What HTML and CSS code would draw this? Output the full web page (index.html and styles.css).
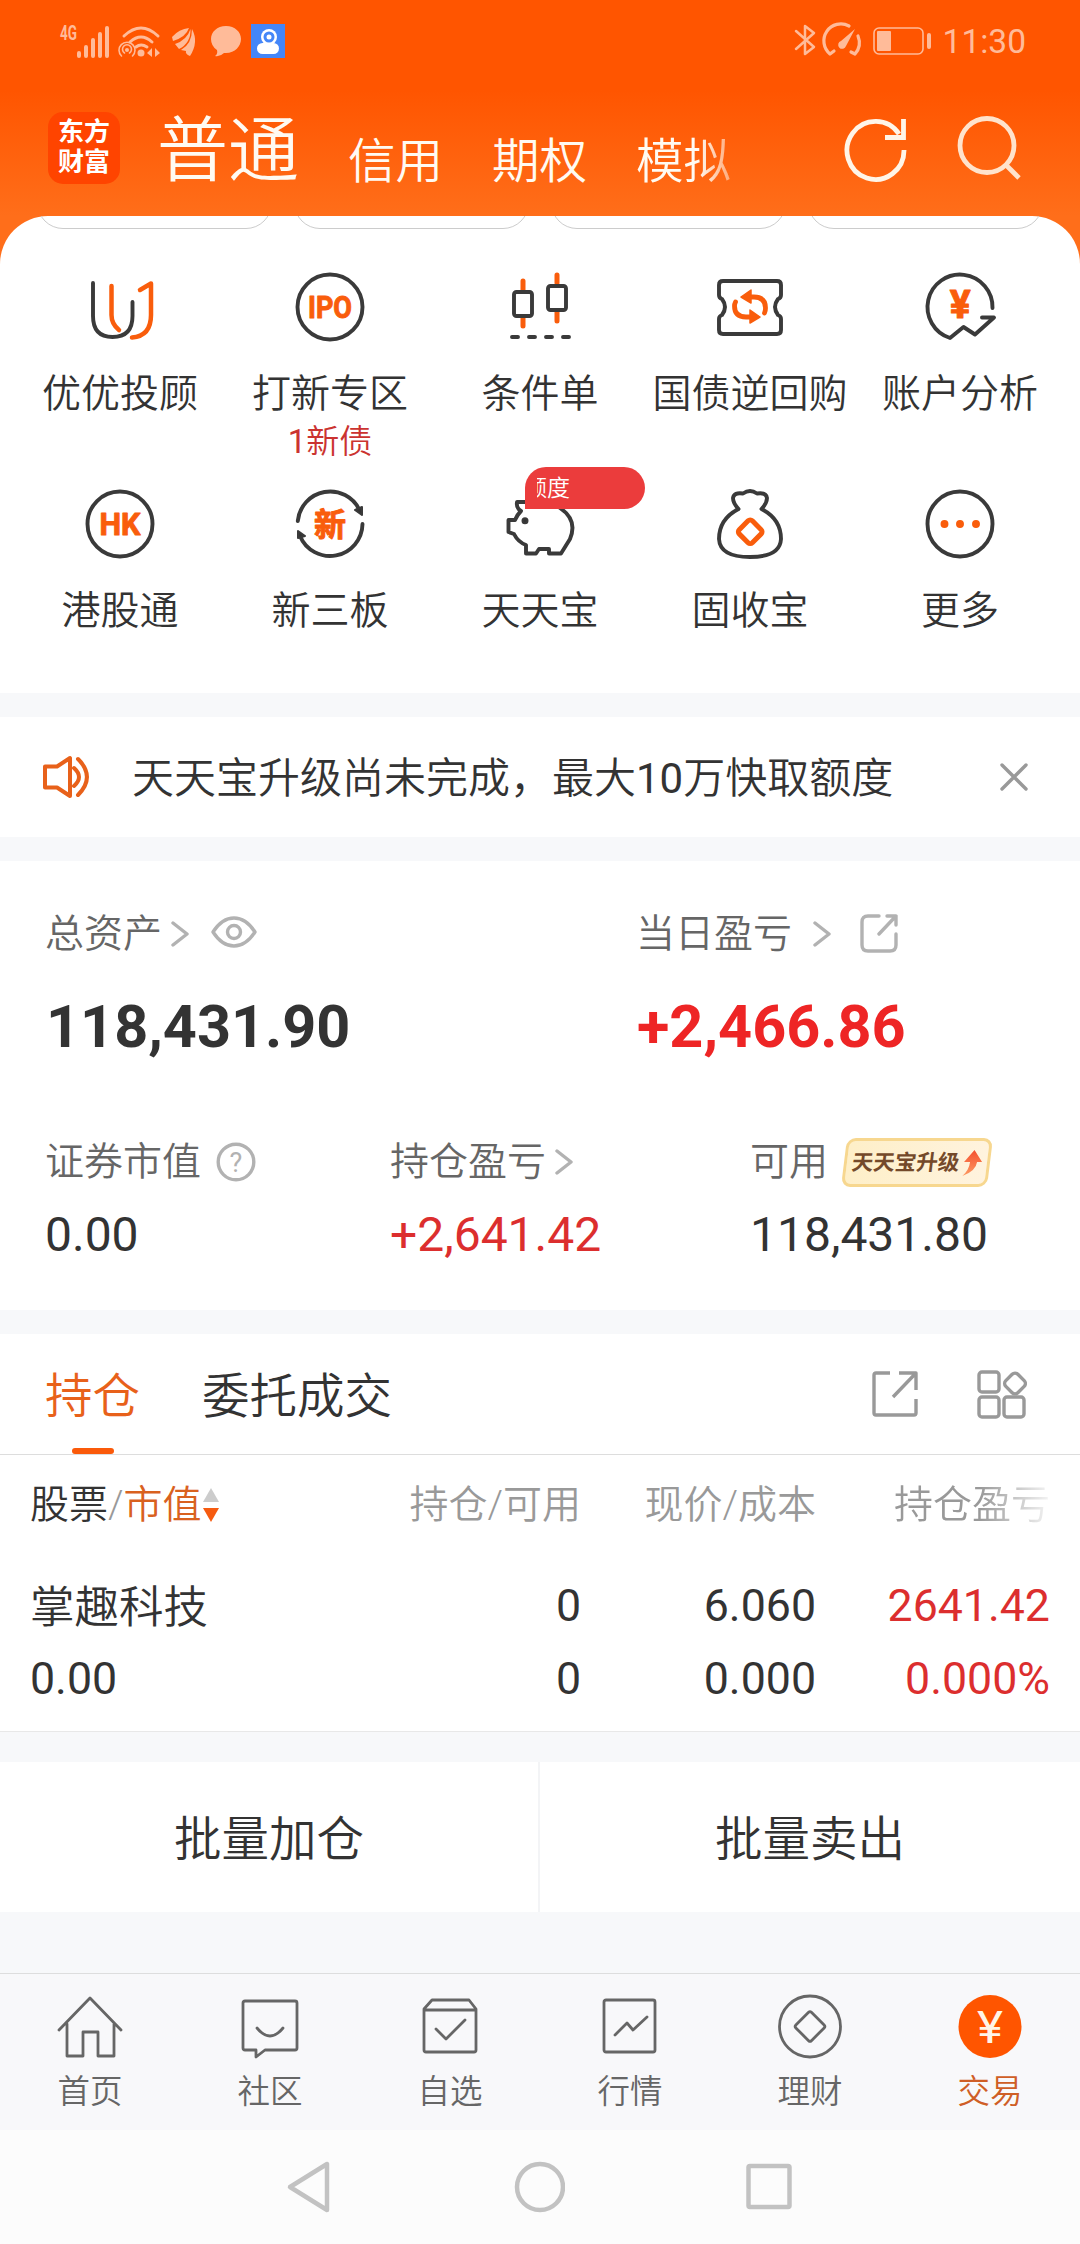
FILE: index.html
```html
<!doctype html>
<html lang="zh-CN">

<head>
    <meta charset="utf-8">
    <title>交易</title>
    <meta name="viewport" content="width=device-width, initial-scale=1">
    <link rel="stylesheet" href="styles.css">
</head>

<body>
    <header class="header">
        <div class="status">
            <div class="status-left">
                <svg class="status-signal" width="54" height="36" viewBox="-4 0 54 36">
                    <text x="0" y="17" textLength="17" lengthAdjust="spacingAndGlyphs">4G</text>
                    <path d="M19 30v3M26 24v9M33 17v16M40 11v22M47 5v28" />
                </svg>
                <svg class="status-wifi" width="44" height="36" viewBox="0 0 44 36">
                    <path d="M6 13Q23-3 40 13M12 19Q23 9 34 19M18 24Q23 20 29 24" stroke-width="3" />
                    <path d="M3.500 33A8 8 0 1 1 14.500 33M6.500 30A4.500 4.500 0 1 1 11.500 30" stroke-width="1.600" />
                    <circle class="fill" cx="9" cy="27" r="2" />
                    <circle class="fill" cx="23" cy="30" r="3.500" />
                    <path class="fill" d="M29 30l5-5v9zM37 25l5 5-5 4z" />
                </svg>
                <svg class="status-leaf" width="26" height="30" viewBox="0 0 26 30">
                    <path d="M1 10Q8 2 18 1Q15 10 2 14zM4 17Q16 13 19.500 2Q20 16 8 22zM10 23Q21 17 21 2Q28 15 19 29Q14 27 15 24z" />
                </svg>
                <svg class="status-chat" width="32" height="32" viewBox="0 0 32 32">
                    <path d="M16 1C25 1 31 7 31 14S25 28 16 28L14 28Q10 32 5 31Q8 29 7 25Q1 21 1 14C1 7 7 1 16 1z" />
                </svg>
                <svg class="status-cam" width="34" height="34" viewBox="0 0 34 34">
                    <rect width="34" height="34" fill="#4486f8" />
                    <circle cx="18" cy="13" r="8" fill="#fff" />
                    <circle cx="18" cy="13" r="5.500" fill="#4486f8" />
                    <circle cx="18" cy="13" r="2.500" fill="#fff" />
                    <rect x="6" y="19" width="22" height="11" rx="5.500" fill="#fff" />
                </svg>
            </div>
            <div class="status-right">
                <svg width="22" height="34" viewBox="0 0 22 34">
                    <path d="M2 8L20 24L11 31V3L20 10L2 26" stroke-width="2.500" />
                </svg>
                <svg width="38" height="34" viewBox="0 0 38 34">
                    <path d="M25 3A17 17 0 0 0 6 31L10 28M34 13Q38 23 31 31L27 29" stroke-width="3.200" />
                    <path class="fill" d="M31 6L22 23A4 4 0 1 1 17 18z" />
                </svg>
                <svg width="60" height="34" viewBox="0 0 60 34">
                    <rect x="2" y="5" width="49" height="26" rx="5" stroke-width="1.600" />
                    <rect class="fill" x="5" y="8" width="14" height="20" rx="1" />
                    <rect class="fill" x="55" y="10" width="4" height="16" rx="2" />
                </svg>
                <span class="status-time">11:30</span>
            </div>
        </div>
        <div class="topnav">
            <div class="logo">东方<br>财富</div>
            <nav class="accounts">
                <span class="account account-active">普通</span>
                <span class="account">信用</span>
                <span class="account">期权</span>
                <span class="account account-fade">模拟</span>
            </nav>
            <svg class="icon-refresh" width="64" height="66" viewBox="0 0 64 66">
                <path d="M60 34A28.500 29 0 1 1 55 18" />
                <path d="M59.500 3V21.500H41" />
            </svg>
            <svg class="icon-search" width="66" height="66" viewBox="0 0 66 66">
                <circle cx="30" cy="29.500" r="27" />
                <path d="M48 48L62 62" />
            </svg>
        </div>
    </header>

    <section class="panel shortcuts">
        <div class="pills"><i></i><i></i><i></i><i></i></div>
        <div class="shortcut-grid">
            <div class="shortcut">
                <svg class="shortcut-icon" viewBox="0 0 72 72">
                    <path d="M9 12V45Q9 66 28.500 66Q48.500 66 48.500 45V31" />
                    <path class="accent" d="M27.500 15V44Q27.500 53 35 59M48 66.500Q67 65 67 44V12.500L56 19" stroke-width="4.500" />
                </svg>
                <span>优优投顾</span>
            </div>
            <div class="shortcut">
                <svg class="shortcut-icon" viewBox="0 0 72 72">
                    <circle cx="36" cy="36" r="32.500" />
                    <text x="14" y="47" textLength="44" lengthAdjust="spacingAndGlyphs">IPO</text>
                </svg>
                <span>打新专区</span>
                <small><i class="num">1</i>新债</small>
            </div>
            <div class="shortcut">
                <svg class="shortcut-icon" viewBox="0 0 72 72">
                    <path class="accent" d="M19 10V19M19 46V55M53 4V12M53 41V50" stroke-width="5" />
                    <rect x="10" y="21" width="18" height="24" rx="2.500" />
                    <rect x="44" y="15" width="18" height="24" rx="2.500" />
                    <path d="M8 66H14M25 66H31M42 66H48M59 66H65" />
                </svg>
                <span>条件单</span>
            </div>
            <div class="shortcut">
                <svg class="shortcut-icon" viewBox="0 0 72 72">
                    <path d="M9 10H63Q67 10 67 14V24Q67 27 64 28Q58 36 64 44Q67 45 67 48V59Q67 63 63 63H9Q5 63 5 59V48Q5 45 8 44Q14 36 8 28Q5 27 5 24V14Q5 10 9 10z" />
                    <path class="accent" d="M36 26H40Q51.500 26 51.500 37Q51.500 40 50.500 42M21.500 31Q20.500 33 20.500 35Q20.500 46 32 46H36" stroke-width="4.800" />
                    <path class="accent-fill" d="M27 26L37 19V32zM46 46L36 39V52z" />
                </svg>
                <span>国债逆回购</span>
            </div>
            <div class="shortcut">
                <svg class="shortcut-icon" viewBox="0 0 72 72">
                    <path d="M68.500 37A32.500 32.500 0 1 0 26 67L39.500 56L51 63.500L70 46.500H58" />
                    <text class="yuan" x="36.300" y="47" text-anchor="middle">¥</text>
                </svg>
                <span>账户分析</span>
            </div>
            <div class="shortcut">
                <svg class="shortcut-icon" viewBox="0 0 72 72">
                    <circle cx="36" cy="36" r="32.500" />
                    <text x="15.500" y="47" textLength="41" lengthAdjust="spacingAndGlyphs">HK</text>
                </svg>
                <span>港股通</span>
            </div>
            <div class="shortcut">
                <svg class="shortcut-icon" viewBox="0 0 72 72">
                    <path d="M3.800 33A32.500 32.500 0 0 1 65.500 22M68.500 36A32.500 32.500 0 0 1 6 48" />
                    <path class="dark-fill" d="M61 22L68 19V27zM4 43L11 48L4 50z" />
                    <text x="20" y="47.500">新</text>
                </svg>
                <span>新三板</span>
            </div>
            <div class="shortcut">
                <svg class="shortcut-icon" viewBox="0 0 72 72">
                    <path d="M24 14H13Q12 20 17 23Q13 27 11 32H4.500V44L10 46Q14 54 22 57V65.500H32L35 61H45V65.500H57L66 51Q74 32 56 20" />
                    <circle class="dark-fill" cx="21" cy="32.700" r="2.500" />
                </svg>
                <span>天天宝</span>
                <b class="ribbon"><em>额度</em></b>
            </div>
            <div class="shortcut">
                <svg class="shortcut-icon" viewBox="0 0 72 72">
                    <path d="M24.500 21Q5 31 5 51Q6 69 36 69Q66 69 67 51Q67 31 47.500 21Q53 15 53 10Q52 4 43 5.500Q36 .5 29 5.500Q20 4 19 10Q19 15 24.500 21" />
                    <rect class="accent" x="27" y="34.500" width="18.500" height="18.500" rx="3" transform="rotate(45 36.200 43.700)" stroke-width="5" />
                </svg>
                <span>固收宝</span>
            </div>
            <div class="shortcut">
                <svg class="shortcut-icon" viewBox="0 0 72 72">
                    <circle cx="36" cy="36" r="32.500" />
                    <g class="accent-fill">
                        <circle cx="20.500" cy="36" r="3.200" />
                        <circle cx="36" cy="36" r="3.200" />
                        <circle cx="52" cy="36" r="3.200" />
                    </g>
                </svg>
                <span>更多</span>
            </div>
        </div>
    </section>

    <section class="panel notice">
        <svg class="icon-speaker" width="50" height="44" viewBox="0 0 50 44">
            <path d="M3 11.500H15L28 3V41L15 32.500H3zM32 13Q42 22 32 31M36 4Q54 22 36 40" />
        </svg>
        <p>天天宝升级尚未完成，最大<i class="num">10</i>万快取额度</p>
        <svg class="icon-close" width="30" height="30" viewBox="0 0 30 30">
            <path d="M3 3L27 27M27 3L3 27" />
        </svg>
    </section>

    <section class="panel assets">
        <div class="assets-main">
            <div>
                <div class="label">总资产
                    <svg class="chevron" width="18" height="26" viewBox="0 0 18 26"><path d="M2 2L16 13L2 24" /></svg>
                    <svg class="icon-eye" width="46" height="34" viewBox="0 0 46 34">
                        <path d="M2 17Q11 3 23 3T44 17Q35 31 23 31T2 17z" />
                        <circle cx="23" cy="17" r="6.500" />
                    </svg>
                </div>
                <div class="total">118,431.90</div>
            </div>
            <div>
                <div class="label">当日盈亏
                    <svg class="chevron chevron-gap" width="18" height="26" viewBox="0 0 18 26"><path d="M2 2L16 13L2 24" /></svg>
                    <svg class="icon-share-sm" width="38" height="40" viewBox="0 0 38 40">
                        <path d="M19 3H8Q2 3 2 9V32Q2 38 8 38H30Q36 38 36 32V21M27 3H36V12M36 3L19 21" />
                    </svg>
                </div>
                <div class="total up">+2,466.86</div>
            </div>
        </div>
        <div class="assets-sub">
            <div>
                <div class="label">证券市值
                    <svg class="icon-help" width="40" height="40" viewBox="0 0 40 40">
                        <circle cx="20" cy="20" r="17.800" />
                        <text x="20" y="29.500" text-anchor="middle">?</text>
                    </svg>
                </div>
                <div class="value">0.00</div>
            </div>
            <div>
                <div class="label">持仓盈亏
                    <svg class="chevron" width="18" height="26" viewBox="0 0 18 26"><path d="M2 2L16 13L2 24" /></svg>
                </div>
                <div class="value up">+2,641.42</div>
            </div>
            <div>
                <div class="label">可用
                    <span class="upgrade">天天宝升级
                        <svg width="19" height="26" viewBox="0 0 19 26">
                            <path d="M10 0L19 12H14Q14 21 1 26Q7 20 7 12H1z" fill="url(#arrow)" />
                            <defs>
                                <linearGradient id="arrow" x1="0" y1="0" x2="0" y2="1">
                                    <stop offset="0" stop-color="#f4502f" />
                                    <stop offset="1" stop-color="#fd9a62" />
                                </linearGradient>
                            </defs>
                        </svg>
                    </span>
                </div>
                <div class="value">118,431.80</div>
            </div>
        </div>
    </section>

    <section class="panel holdings">
        <div class="tabs">
            <span class="tab tab-active">持仓</span>
            <span class="tab">委托成交</span>
            <svg class="icon-share" width="48" height="48" viewBox="0 0 48 48">
                <path d="M19 3H5Q3 3 3 5V43Q3 45 5 45H43Q45 45 45 43V29M28 3H45V20M45 3L22 27" />
            </svg>
            <svg class="icon-grid" width="50" height="50" viewBox="0 0 50 50">
                <rect x="2" y="3" width="20" height="20" rx="3" />
                <rect x="2" y="28" width="20" height="20" rx="3" />
                <rect x="27" y="28" width="20" height="20" rx="3" />
                <rect x="29.500" y="6" width="17" height="17" rx="4" transform="rotate(45 38 14.500)" />
            </svg>
        </div>
        <div class="row row-head">
            <span class="sort">股票<i>/</i><b>市值</b>
                <svg width="18" height="36" viewBox="0 0 18 36">
                    <path d="M9 1L17 15H1z" fill="#ccc" />
                    <path d="M1 21H17L9 35z" fill="#f65b10" />
                </svg>
            </span>
            <span>持仓/可用</span>
            <span>现价/成本</span>
            <span class="col-fade">持仓盈亏</span>
        </div>
        <div class="row">
            <span class="stock">掌趣科技</span>
            <span>0</span>
            <span>6.060</span>
            <span class="up">2641.42</span>
        </div>
        <div class="row">
            <span>0.00</span>
            <span>0</span>
            <span>0.000</span>
            <span class="up">0.000%</span>
        </div>
    </section>

    <section class="batch">
        <span>批量加仓</span>
        <span>批量卖出</span>
    </section>

    <nav class="tabbar">
        <div class="tabbar-item">
            <svg viewBox="0 0 66 66">
                <path d="M2 36L33 4L64 36M10 30V62H26V38H41V62H57V30" />
            </svg>
            <span>首页</span>
        </div>
        <div class="tabbar-item">
            <svg viewBox="0 0 66 66">
                <path d="M8 7H58Q60 7 60 9V54Q60 56 58 56H28L19 63V56H8Q6 56 6 54V9Q6 7 8 7zM20 34Q33 50 46 34" />
            </svg>
            <span>社区</span>
        </div>
        <div class="tabbar-item">
            <svg viewBox="0 0 66 66">
                <path d="M7 15L15 6H52L59 15V56Q59 58 57 58H9Q7 58 7 56zM7 16H59M19 35L29 45L48 26" />
            </svg>
            <span>自选</span>
        </div>
        <div class="tabbar-item">
            <svg viewBox="0 0 66 66">
                <rect x="7" y="6" width="51" height="52" rx="2" />
                <path d="M18 41L30 29L36 36L50 23" />
            </svg>
            <span>行情</span>
        </div>
        <div class="tabbar-item">
            <svg viewBox="0 0 66 66">
                <circle cx="33" cy="32.500" r="30.500" />
                <rect x="22" y="21.500" width="22" height="22" rx="2" transform="rotate(45 33 32.500)" />
            </svg>
            <span>理财</span>
        </div>
        <div class="tabbar-item tabbar-active">
            <svg viewBox="0 0 66 66">
                <circle cx="33" cy="32.500" r="31.500" />
                <text x="20" y="49" textLength="26" lengthAdjust="spacingAndGlyphs">¥</text>
            </svg>
            <span>交易</span>
        </div>
    </nav>

    <footer class="sysnav">
        <svg width="46" height="54" viewBox="0 0 46 54"><path d="M42 4V50L5 27z" /></svg>
        <svg width="54" height="54" viewBox="0 0 54 54"><circle cx="29" cy="27" r="23" /></svg>
        <svg width="50" height="54" viewBox="0 0 50 54"><rect x="4.500" y="6" width="41" height="41" rx="1.500" /></svg>
    </footer>
</body>

</html>
```

FILE: styles.css
```css
* {
    box-sizing: border-box;
    margin: 0;
    padding: 0;
}

body {
    width: 1080px;
    height: 2244px;
    overflow: hidden;
    background: linear-gradient(#ff5500 90px, #ff6e1a 216px, #ff6e1a 300px, #f7f8fa 300px);
    color: #333;
    font-family: Roboto, "Noto Sans CJK SC", sans-serif;
    font-weight: 350;
}

svg {
    display: block;
    flex: none;
    fill: none;
    stroke-linecap: round;
    stroke-linejoin: round;
}

i,
em {
    font-style: normal;
}

.num {
    font-weight: 400;
}

.header {
    height: 216px;
}

/* status bar */

.status {
    display: flex;
    justify-content: space-between;
    height: 96px;
    padding: 23px 54px 0 56px;
}

.status svg {
    overflow: visible;
    stroke: #ffbb99;
}

.status svg .fill {
    fill: #ffbb99;
    stroke: none;
}

.status-left,
.status-right {
    display: flex;
    align-items: flex-start;
}

.status-signal {
    stroke-width: 4;
}

.status-signal text {
    fill: #ffbb99;
    stroke: none;
    font-size: 20px;
    font-weight: 700;
}

.status-wifi {
    margin-left: 8px;
}

.status .status-leaf,
.status .status-chat {
    fill: #ffbb99;
    stroke: none;
}

.status-leaf {
    margin: 4px 0 0 9px;
}

.status-chat {
    margin: 2px 0 0 13px;
}

.status .status-cam {
    margin: 1px 0 0 9px;
    stroke: none;
}

.status-right {
    gap: 8px;
}

.status-right svg:nth-child(3) {
    margin-left: 2px;
}

.status-time {
    margin-left: 3px;
    color: #ffbb99;
    font-size: 33.5px;
    font-weight: 400;
    line-height: 37px;
}

/* account switcher */

.topnav {
    display: flex;
    height: 120px;
    padding: 16px 0 0 48px;
}

.logo {
    width: 72px;
    height: 72px;
    padding-top: 5px;
    border-radius: 15px;
    background: #ff4400;
    color: #fff;
    font-size: 26px;
    font-weight: 700;
    line-height: 30px;
    text-align: center;
}

.accounts {
    display: flex;
    align-items: flex-start;
    gap: 49px;
    width: 686px;
    margin-top: -14px;
    padding-left: 37px;
    color: #fffaf2;
    font-size: 47.5px;
}

.account {
    margin-top: 29px;
    line-height: 70px;
}

.account-active {
    margin-top: 0;
    font-size: 71px;
    line-height: 106px;
}

.account-fade {
    -webkit-mask-image: linear-gradient(90deg, #000 65%, rgba(0, 0, 0, .45) 100%);
    mask-image: linear-gradient(90deg, #000 65%, rgba(0, 0, 0, .45) 100%);
}

.icon-refresh,
.icon-search {
    margin-top: 4px;
    stroke: #fff5e8;
    stroke-width: 4.8;
    stroke-linecap: butt;
    stroke-linejoin: miter;
}

.icon-refresh {
    margin-left: 38px;
}

.icon-search {
    margin-left: 49px;
    stroke: #ffe3cc;
}

/* shortcuts */

.panel {
    margin-bottom: 24px;
    background: #fff;
}

.shortcuts {
    height: 477px;
    border-radius: 48px 48px 0 0;
}

.pills {
    display: flex;
    align-items: flex-end;
    gap: 22px;
    height: 13px;
    margin-bottom: 42px;
    padding: 0 37px;
    overflow: hidden;
}

.pills i {
    flex: 1;
    height: 60px;
    border: 1px solid #ccc;
    border-radius: 26px;
}

.shortcut-grid {
    display: grid;
    grid-template-columns: repeat(5, 210px);
    grid-auto-rows: 217px;
    padding: 0 15px;
}

.shortcut {
    position: relative;
    display: flex;
    flex-direction: column;
    align-items: center;
    font-size: 39px;
    line-height: 50px;
}

.shortcut-icon {
    width: 72px;
    height: 72px;
    margin-bottom: 26px;
    overflow: visible;
    stroke: #3a3a3a;
    stroke-width: 3.9;
}

.shortcut-icon .accent {
    stroke: #f95d0c;
}

.shortcut-icon .accent-fill {
    fill: #f95d0c;
    stroke: #f95d0c;
    stroke-width: 1.5;
}

.shortcut-icon .dark-fill {
    fill: #333;
    stroke-width: 2;
}

.shortcut-icon text {
    fill: #f95d0c;
    stroke: #f95d0c;
    stroke-width: 1;
    font-size: 32px;
    font-weight: 700;
}

.shortcut-icon .yuan {
    font-size: 39px;
}

.shortcut small {
    margin-top: 2px;
    color: #cb3330;
    font-size: 33px;
    line-height: 42px;
}

.ribbon {
    position: absolute;
    top: -21px;
    left: 90px;
    width: 120px;
    height: 42px;
    padding-left: 12px;
    border-radius: 21px 21px 21px 0;
    background: #eb3c3c;
    color: #fff;
    font-size: 23px;
    font-weight: 350;
    line-height: 43px;
}

.ribbon em {
    display: flex;
    justify-content: flex-end;
    width: 33px;
    overflow: hidden;
    white-space: nowrap;
}

/* notice */

.notice {
    display: flex;
    align-items: center;
    height: 120px;
    padding: 0 51px 0 42px;
}

.icon-speaker {
    stroke: #e8611a;
    stroke-width: 4;
}

.notice p {
    flex: 1;
    padding: 3px 0 0 40px;
    font-size: 42px;
    line-height: 60px;
}

.icon-close {
    stroke: #999;
    stroke-width: 3.4;
}

/* assets */

.assets {
    height: 449px;
    padding: 48px 0 0 45px;
}

.assets-main {
    display: grid;
    grid-template-columns: 591px 1fr;
}

.assets-sub {
    display: grid;
    grid-template-columns: 345px 360px 1fr;
    margin-top: 75px;
}

.label {
    display: flex;
    align-items: center;
    height: 50px;
    color: #666;
    font-size: 39px;
    line-height: 50px;
}

.label svg {
    stroke: #b2b2b2;
    stroke-width: 3.4;
}

.chevron {
    margin-left: 9px;
}

.chevron-gap {
    margin-left: 21px;
}

.icon-eye {
    margin: 0 0 4px 22px;
}

.icon-share-sm {
    margin: 0 0 2px 29px;
}

.icon-help {
    margin-left: 15px;
}

.icon-help text {
    fill: #b2b2b2;
    stroke: none;
    font-size: 27px;
    font-weight: 400;
}

.total {
    margin-top: 33px;
    padding-left: 1px;
    font-size: 59.4px;
    font-weight: 700;
    line-height: 70px;
}

.value {
    margin-top: 18px;
    font-size: 48px;
    font-weight: 400;
    line-height: 60px;
}

.up {
    color: #dc2e2e;
}

.total.up {
    color: #ee2525;
}

.upgrade {
    display: flex;
    align-items: center;
    gap: 3px;
    width: 146px;
    height: 49px;
    margin-left: 16px;
    padding-left: 5px;
    border: 3px solid #f7d78f;
    border-radius: 9px;
    background: linear-gradient(90deg, #feefc8, #fff3de);
    color: #74492a;
    font-size: 21.5px;
    font-weight: 700;
    transform: skewX(-7deg);
}

.label .upgrade svg {
    stroke: none;
}

/* holdings */

.holdings {
    height: 398px;
    margin-bottom: 30px;
    border-bottom: 1px solid #e8e8e8;
}

.tabs {
    display: flex;
    align-items: center;
    height: 121px;
    padding: 0 53px 0 45px;
    border-bottom: 1px solid #ddd;
}

.tab {
    position: relative;
    height: 120px;
    margin-right: 62px;
    font-size: 47.5px;
    line-height: 126px;
}

.tab-active {
    color: #e8611a;
}

.tab-active::after {
    content: "";
    position: absolute;
    bottom: 0;
    left: 27px;
    width: 42px;
    height: 6px;
    border-radius: 3px;
    background: #fa5a0a;
}

.icon-share,
.icon-grid {
    stroke: #999;
    stroke-width: 3.4;
}

.icon-share {
    margin-left: auto;
    stroke-linecap: butt;
}

.icon-grid {
    margin-left: 58px;
}

.row {
    display: grid;
    grid-template-columns: 316px 235px 235px 234px;
    padding: 0 30px;
    font-size: 44.7px;
    font-weight: 400;
    line-height: 73px;
    text-align: right;
}

.row span:first-child {
    text-align: left;
}

.row-head {
    height: 98px;
    margin-bottom: 17px;
    color: #999;
    font-size: 39px;
    font-weight: 350;
    line-height: 101px;
}

.sort {
    display: flex;
    align-items: center;
    color: #333;
}

.sort i {
    color: #999;
}

.sort b {
    color: #d9611f;
    font-weight: 350;
}

.sort svg {
    margin-bottom: 2px;
}

.row .stock {
    height: 73px;
    font-size: 44.5px;
    font-weight: 350;
    line-height: 76px;
}

.col-fade {
    -webkit-mask-image: linear-gradient(90deg, #000 70%, rgba(0, 0, 0, .1) 100%);
    mask-image: linear-gradient(90deg, #000 70%, rgba(0, 0, 0, .1) 100%);
}

.batch {
    display: grid;
    grid-template-columns: 1fr 1fr;
    height: 150px;
    background: #fff;
    font-size: 47.5px;
    line-height: 156px;
    text-align: center;
}

.batch span {
    height: 150px;
}

.batch span:first-child {
    border-right: 2px solid #f3f4f6;
}

/* bottom tab bar */

.tabbar {
    display: grid;
    grid-template-columns: repeat(6, 180px);
    height: 157px;
    margin-top: 61px;
    padding-top: 20px;
    border-top: 1px solid #ddd;
    background: #f8f8fa;
}

.tabbar-item {
    display: flex;
    flex-direction: column;
    align-items: center;
    color: #666;
    font-size: 32.5px;
    line-height: 42px;
}

.tabbar-item svg {
    width: 66px;
    height: 66px;
    margin-bottom: 11px;
    stroke: #666;
    stroke-width: 2.8;
}

.tabbar-active {
    color: #cf5e26;
}

.tabbar-active circle {
    fill: #ff5500;
    stroke: none;
}

.tabbar-active text {
    fill: #fff5e8;
    stroke: none;
    font-size: 44px;
    font-weight: 400;
}

/* system navigation */

.sysnav {
    display: flex;
    justify-content: space-between;
    height: 114px;
    padding: 30px 286px 0 285px;
    background: #fcfcfc;
}

.sysnav svg {
    stroke: #c2c2c2;
    stroke-width: 4.5;
}
```
